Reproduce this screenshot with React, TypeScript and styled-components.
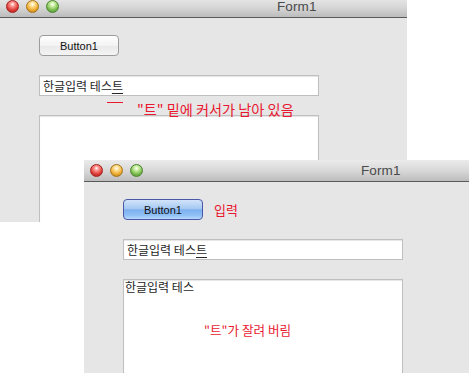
import React from 'react';
import styled, {createGlobalStyle, css} from 'styled-components';

const GlobalStyle = createGlobalStyle`
    html, body {
        margin: 0;
        padding: 0;
        background: #ffffff;
    }
    body {
        font-family: "Liberation Sans", "Noto Sans CJK KR", sans-serif;
    }
`;

const RED = '#e9172f';
const KO_FONT = `"Noto Sans CJK KR", "Liberation Sans", sans-serif`;

const Desktop = styled.div`
    position: relative;
    width: 475px;
    height: 373px;
    overflow: hidden;
    background: #ffffff;
`;

// windows sit on the desktop at their own place, so these are absolute
const Window = styled.div<{ $left: number; $top: number; $width: number; $height: number }>`
    position: absolute;
    left: ${p => p.$left}px;
    top: ${p => p.$top}px;
    width: ${p => p.$width}px;
    height: ${p => p.$height}px;
    display: flex;
    flex-direction: column;
    background: #e6e6e6;
    overflow: hidden;
`;

const TitleBar = styled.div`
    flex: none;
    height: 21px;
    display: flex;
    align-items: center;
    padding-left: 6px;
    background: linear-gradient(#ebebeb, #d6d6d6 55%, #bcbcbc);
    border-bottom: 1px solid #5a5a5a;
`;

const Lights = styled.div`
    display: flex;
    gap: 7px;
`;

const lightColors = {
    red: ['#ff9a94', '#dc3b36', '#a51f1b'],
    yellow: ['#ffe39a', '#ecaa2e', '#a8741a'],
    green: ['#cff0a8', '#78bb4c', '#4c8530'],
};

const Light = styled.span<{ $color: keyof typeof lightColors }>`
    width: 13px;
    height: 13px;
    border-radius: 50%;
    box-sizing: border-box;
    ${p => css`
        background: radial-gradient(circle at 50% 30%, #ffffff 0, ${lightColors[p.$color][0]} 22%, ${lightColors[p.$color][1]} 62%, ${lightColors[p.$color][2]} 100%);
        border: 1px solid ${lightColors[p.$color][2]};
    `}
`;

const Title = styled.div`
    margin-left: 218px;
    font-family: "Liberation Sans", sans-serif;
    font-size: 13.5px;
    color: #4a4a4a;
    letter-spacing: 0.1px;
`;

const Content = styled.div`
    position: relative;
    flex: 1;
    display: flex;
    flex-direction: column;
    padding: 17px 0 0 39px;
    gap: 19px;
`;

const ButtonRow = styled.div`
    display: flex;
    align-items: center;
    gap: 11px;
`;

const MacButton = styled.div<{ $active?: boolean }>`
    width: 80px;
    height: 21px;
    box-sizing: border-box;
    border-radius: 4px;
    display: flex;
    align-items: center;
    justify-content: center;
    font-family: "Liberation Sans", sans-serif;
    font-size: 11px;
    color: #111;
    ${p => p.$active ? css`
        border: 1px solid #4b58a8;
        background: linear-gradient(#d2e4fa 0%, #a6c9f3 45%, #7eb0ef 52%, #8fbff5 80%, #b8dafc 100%);
    ` : css`
        border: 1px solid #9c9c9c;
        background: linear-gradient(#ffffff, #f3f3f3 50%, #e9e9e9 51%, #f4f4f4);
    `}
`;

const RedLabel = styled.span<{ $size?: number }>`
    font-family: ${KO_FONT};
    font-size: ${p => p.$size ?? 13}px;
    color: ${RED};
    line-height: 15px;
`;

const TextField = styled.div`
    width: 280px;
    height: 21px;
    box-sizing: border-box;
    border: 1px solid #bfbfbf;
    background: #ffffff;
    box-shadow: inset 0 1px 1px #e4e4e4;
    display: flex;
    align-items: center;
    padding: 0 3px;
    font-family: ${KO_FONT};
    font-size: 12px;
    color: #262626;
`;

const Composing = styled.span`
    text-decoration: underline;
    text-underline-offset: 2px;
    text-decoration-thickness: 1px;
`;

const TextArea = styled.div`
    position: relative;
    width: 280px;
    height: 150px;
    box-sizing: border-box;
    border: 1px solid #bfbfbf;
    background: #ffffff;
    box-shadow: inset 0 1px 1px #e4e4e4;
    padding: 0 1px;
    font-family: ${KO_FONT};
    font-size: 12px;
    line-height: 14px;
    color: #262626;
`;

// annotations drawn over the form
const Note = styled(RedLabel)<{ $left: number; $top: number }>`
    position: absolute;
    left: ${p => p.$left}px;
    top: ${p => p.$top}px;
    white-space: nowrap;
    z-index: 2;
`;

const CursorMark = styled.span`
    position: absolute;
    left: 107px;
    top: 84px;
    width: 16px;
    height: 1px;
    background: ${RED};
`;

function WindowTitle() {
    return (
        <TitleBar>
            <Lights>
                <Light $color="red"/>
                <Light $color="yellow"/>
                <Light $color="green"/>
            </Lights>
            <Title>Form1</Title>
        </TitleBar>
    );
}

function App() {
    return (
        <Desktop>
            <GlobalStyle/>
            <Window $left={0} $top={-4} $width={407} $height={226}>
                <WindowTitle/>
                <Content>
                    <ButtonRow>
                        <MacButton>Button1</MacButton>
                    </ButtonRow>
                    <TextField>한글입력 테스<Composing>트</Composing></TextField>
                    <TextArea/>
                    <CursorMark/>
                    <Note $size={14.2} $left={137} $top={84}>"트" 밑에 커서가 남아 있음</Note>
                </Content>
            </Window>
            <Window $left={84} $top={160} $width={385} $height={230}>
                <WindowTitle/>
                <Content>
                    <ButtonRow>
                        <MacButton $active>Button1</MacButton>
                        <RedLabel>입력</RedLabel>
                    </ButtonRow>
                    <TextField>한글입력 테스<Composing>트</Composing></TextField>
                    <TextArea>
                        한글입력 테스
                        <Note $size={12.6} $left={80} $top={42}>"트"가 잘려 버림</Note>
                    </TextArea>
                </Content>
            </Window>
        </Desktop>
    );
}

export default App;
